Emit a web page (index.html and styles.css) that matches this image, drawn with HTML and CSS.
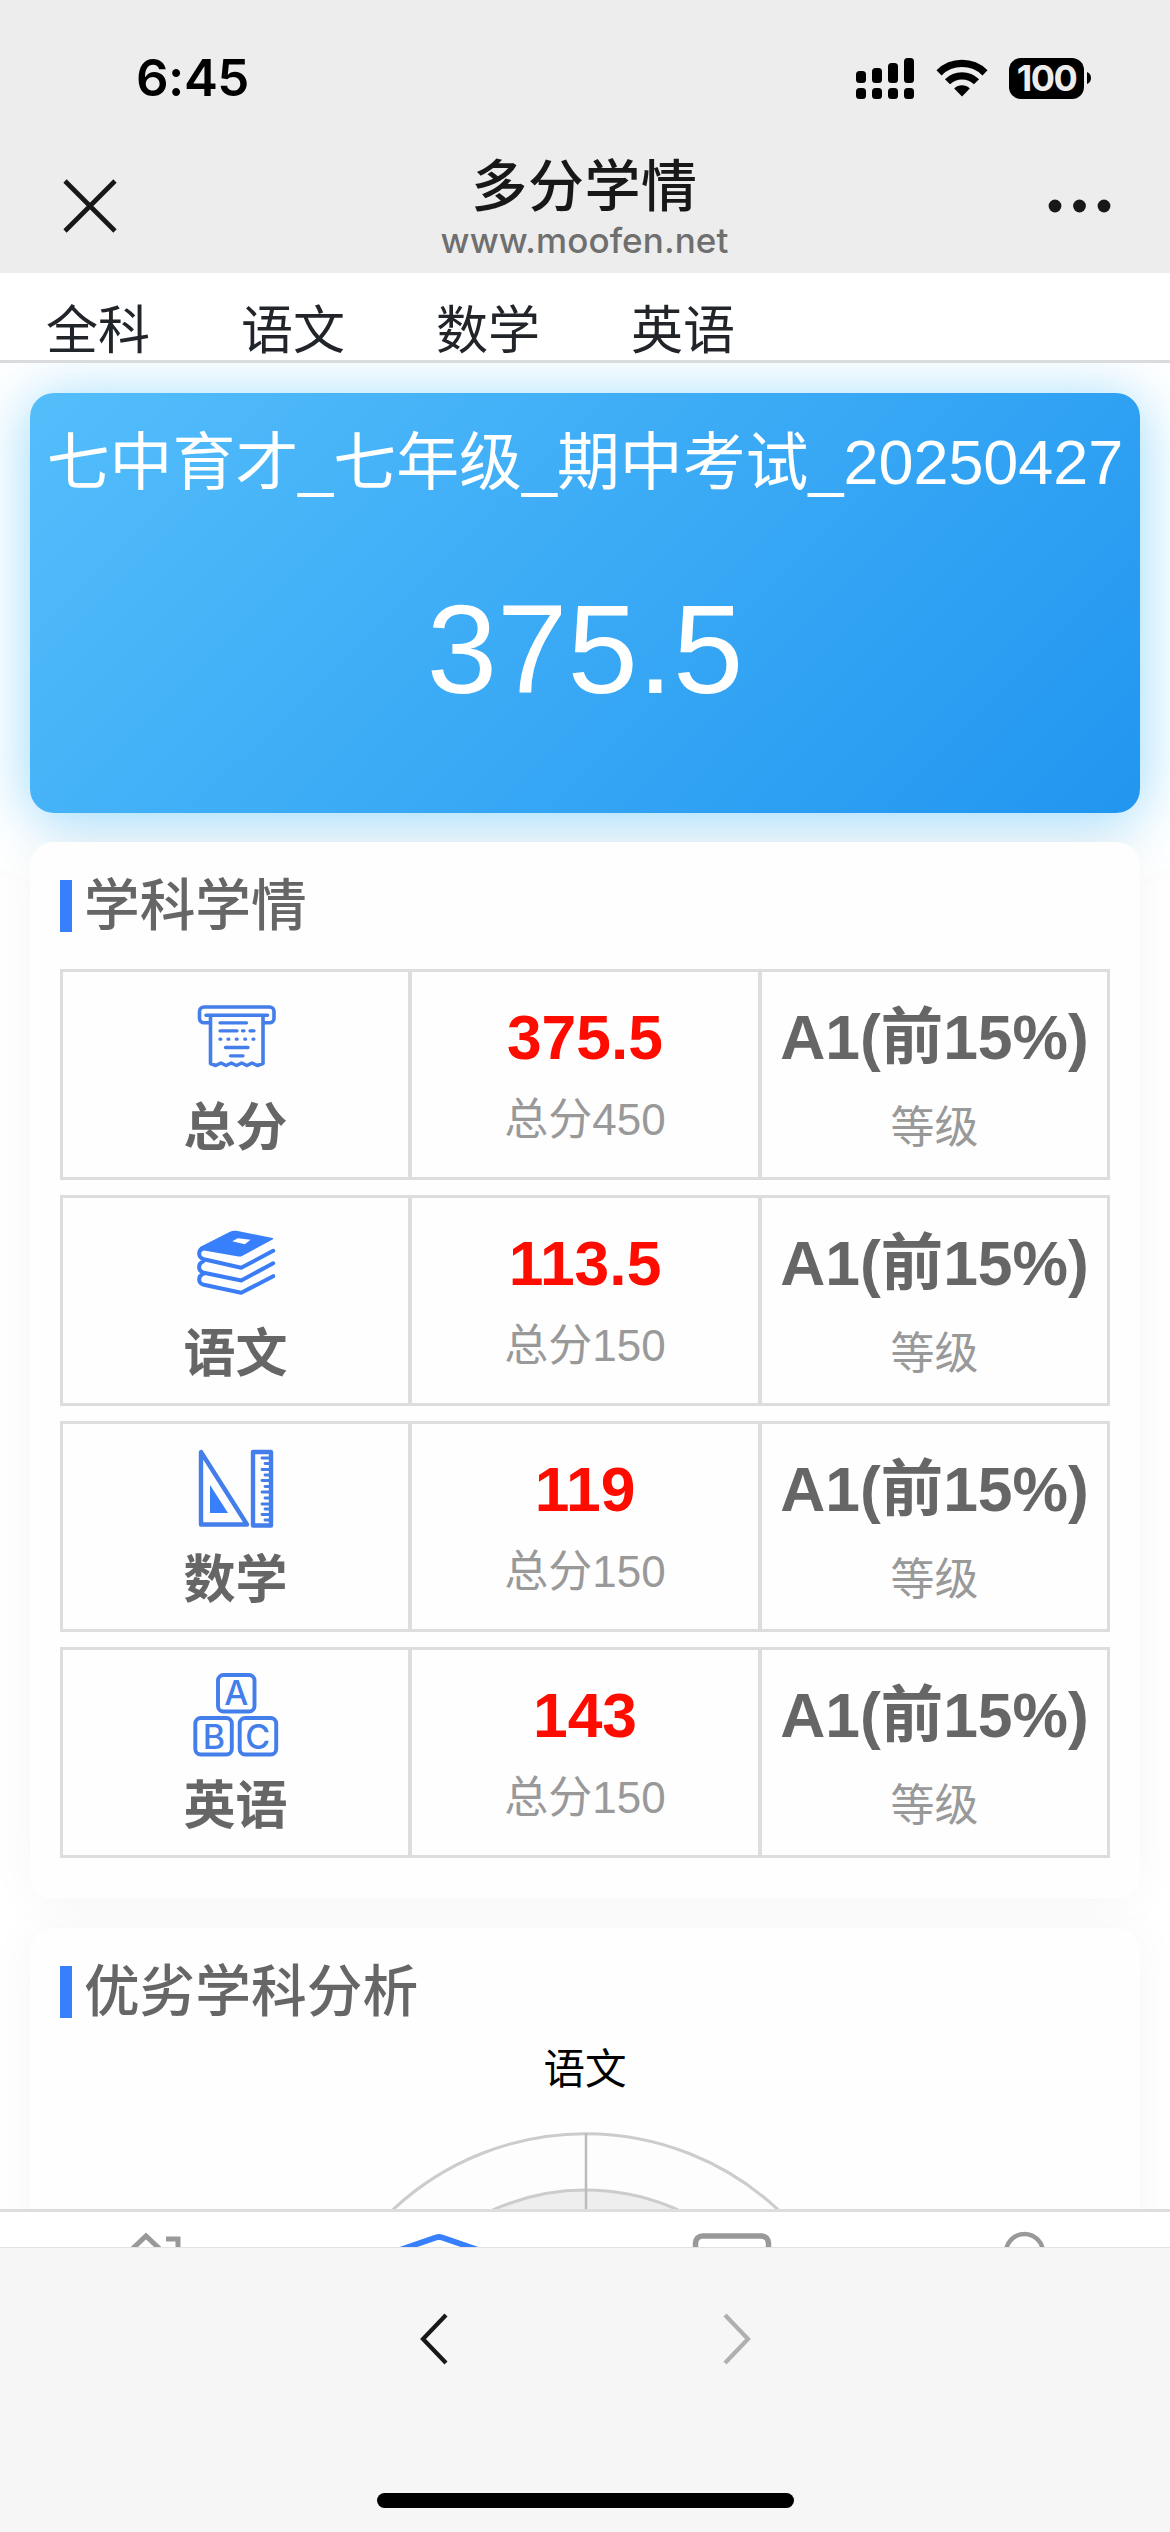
FILE: index.html
```html
<!DOCTYPE html>
<html lang="zh-CN">
<head>
<meta charset="utf-8">
<title>多分学情</title>
<link rel="stylesheet" href="styles.css">
</head>
<body>
<header class="header">
  <div class="status">
    <span class="clock">6:45</span>
    <div class="status-icons">
      <svg class="signal" width="58" height="41" viewBox="0 0 58 41"><g fill="#000"><rect x="0" y="13" width="10" height="12" rx="3.5"/><rect x="16" y="10" width="10" height="15" rx="3.5"/><rect x="32" y="5" width="10" height="20" rx="3.5"/><rect x="48" y="0" width="10" height="25" rx="3.5"/><rect x="0" y="30" width="10" height="11" rx="3.5"/><rect x="16" y="30" width="10" height="11" rx="3.5"/><rect x="32" y="30" width="10" height="11" rx="3.5"/><rect x="48" y="30" width="10" height="11" rx="3.5"/></g></svg>
      <svg class="wifi" width="52" height="38" viewBox="0 0 52 38"><g fill="none" stroke="#000" stroke-width="7.2"><path d="M3 13.8a33 33 0 0 1 46 0"/><path d="M11.5 22.8a20.5 20.5 0 0 1 29 0"/></g><path d="M26 37.5l-7.8-8a11 11 0 0 1 15.6 0z"/></svg>
      <div class="battery"><span class="level">100</span><svg width="4" height="12" viewBox="0 0 4 12"><path d="M0 0a6.5 6.5 0 0 1 0 12z"/></svg></div>
    </div>
  </div>
  <div class="titlebar">
    <svg width="54" height="54" viewBox="0 0 54 54"><path d="M2 2l50 50M52 2L2 52" stroke="#181818" stroke-width="4.6"/></svg>
    <div class="titles"><h1 class="title">多分学情</h1><p class="url">www.moofen.net</p></div>
    <svg width="64" height="14" viewBox="0 0 64 14"><g fill="#181818"><circle cx="7" cy="7" r="6.4"/><circle cx="31.5" cy="7" r="6.4"/><circle cx="56" cy="7" r="6.4"/></g></svg>
  </div>
</header>
<nav class="tabs"><span>全科</span><span>语文</span><span>数学</span><span>英语</span></nav>
<main class="content">
  <section class="exam"><h2 class="exam-name">七中育才_七年级_期中考试_20250427</h2><p class="exam-score">375.5</p></section>
  <section class="panel">
    <h3 class="heading"><span>学科学情</span></h3>
    <div class="rows">
      <div class="row">
        <div class="subject"><div class="icon"><svg width="80" height="64" viewBox="0 0 80 64" fill="none" stroke="#437eea" stroke-width="3.6" stroke-linecap="round" stroke-linejoin="round"><path d="M14 17.800H8a4.500 4.500 0 0 1-4.500-4.500V6.500A4.500 4.500 0 0 1 8 2h65.500A4.500 4.500 0 0 1 78 6.500v6.800a4.500 4.500 0 0 1-4.500 4.500h-6M10 10.200h61.500M14.500 11v47.500l5.200 2 5.200-2.500 5.200 2.500 5.200-2.500 5.200 2.500 5.200-2.500 5.200 2.500 5.200-2.500 5.200 2.500 5.700-2V11"/><path stroke-width="3.300" d="M24 17.800h26.500M24 25.800h17M46.500 25.800h1.500M54 25.800h4M24 34.200h.8M32 34.200h.8M40.300 34.200h.8M48.800 34.200h.8M57 34.200h.8M29.500 42.500h22.500M34.500 50.800h12.500"/></svg></div><b class="name">总分</b></div>
        <div class="score"><b>375.5</b><span>总分450</span></div>
        <div class="grade"><b>A1(前15%)</b><span>等级</span></div>
      </div>
      <div class="row">
        <div class="subject"><div class="icon"><svg width="80" height="66" viewBox="0 0 80 66"><path fill="#387ffb" fill-rule="evenodd" d="M4 17L33.500 2q3-1.600 7-1.200L76.500 8q1.500.6 0 1.500L46 26q-1.500.8-3.500.4L8 20.500 3 23zM36.200 11.200l12.600 3 5.700-4.400-12.700-1.600z"/><path fill="none" stroke="#3b7df4" stroke-width="4" stroke-linecap="round" stroke-linejoin="round" d="M7 18c-5 2-5.500 9.500.8 11.200l37.400 8.600 32-17M7 31.500c-5 2-5.500 9.500.8 11.200l37.400 7.800 32-17.200M7 44c-5 2-5.500 9 .8 10.800l37.400 8 32-16.600"/></svg></div><b class="name">语文</b></div>
        <div class="score"><b>113.5</b><span>总分150</span></div>
        <div class="grade"><b>A1(前15%)</b><span>等级</span></div>
      </div>
      <div class="row">
        <div class="subject"><div class="icon"><svg width="76" height="80" viewBox="0 0 76 80"><path fill="none" stroke="#437eea" stroke-width="4.400" stroke-linejoin="round" d="M3 3v72.500h46zM55 3h18v73.500H55z"/><path fill="#387ffb" d="M12 36v28h18z"/><path stroke="#437eea" stroke-width="2.800" stroke-linecap="round" d="M64 9h8M67 14.500h5M64 20.500h8M67 26h5M64 31.500h8M67 37.500h5M64 43h8M67 49h5M64 55h8M67 60h5M64 65.500h8M67 71h5"/></svg></div><b class="name">数学</b></div>
        <div class="score"><b>119</b><span>总分150</span></div>
        <div class="grade"><b>A1(前15%)</b><span>等级</span></div>
      </div>
      <div class="row">
        <div class="subject"><div class="icon"><svg width="86" height="84" viewBox="0 0 86 84" fill="none" stroke="#437eea" stroke-width="3.900"><rect x="25" y="2" width="36.500" height="36.500" rx="5.500"/><rect x="2.300" y="45" width="36.500" height="36.500" rx="5.500"/><rect x="46.700" y="45" width="36.500" height="36.500" rx="5.500"/><text class="block" x="43.200" y="32">A</text><text class="block" x="21" y="75.500">B</text><text class="block" x="64.800" y="75.500">C</text></svg></div><b class="name">英语</b></div>
        <div class="score"><b>143</b><span>总分150</span></div>
        <div class="grade"><b>A1(前15%)</b><span>等级</span></div>
      </div>
    </div>
  </section>
  <section class="panel analysis">
    <h3 class="heading"><span>优劣学科分析</span></h3>
    <p class="axis">语文</p>
    <svg class="radar" width="1050" height="80" viewBox="0 0 1050 80"><circle cx="525.500" cy="285.700" r="282" fill="#fdfdfd" stroke="#ccc" stroke-width="3"/><circle cx="525.500" cy="285.700" r="225.600" fill="#eee" stroke="#ccc" stroke-width="3"/><path d="M526 3v80" stroke="#bbb" stroke-width="2.500"/></svg>
  </section>
</main>
<nav class="tabbar">
  <svg viewBox="0 0 292 35"><path d="M128 41l18-17 18 17M166 27h12v14" fill="none" stroke="#999" stroke-width="5"/></svg>
  <svg viewBox="0 0 292 35"><path d="M98 41l45-15.500q3-1 6 0l45 15.500" fill="none" stroke="#387ffb" stroke-width="5.800"/></svg>
  <svg viewBox="0 0 292 35"><rect x="110.500" y="24" width="73" height="50" rx="7" fill="none" stroke="#999" stroke-width="5.500"/></svg>
  <svg viewBox="0 0 292 35"><circle cx="146.500" cy="40.500" r="18.500" fill="none" stroke="#999" stroke-width="4.500"/></svg>
</nav>
<footer class="toolbar">
  <div class="history">
    <svg width="30" height="52" viewBox="0 0 30 52"><path d="M27 2L4 26l23 24" fill="none" stroke="#181818" stroke-width="4.200"/></svg>
    <svg width="30" height="52" viewBox="0 0 30 52"><path d="M3 2l23 24L3 50" fill="none" stroke="#b0b0b0" stroke-width="4.200"/></svg>
  </div>
  <div class="home-indicator"></div>
</footer>
</body>
</html>
```
FILE: styles.css
```css
* { box-sizing: border-box; margin: 0; padding: 0; }
body {
  width: 1170px; height: 2532px; overflow: hidden;
  display: flex; flex-direction: column; background: #fff;
  font-family: "Liberation Sans", "Noto Sans CJK SC", sans-serif;
}
svg { display: block; flex: none; }
b, h1, h2, h3 { font-weight: 500; }
.header { height: 273px; flex: none; background: #ededed; }
.status { height: 156px; display: flex; justify-content: space-between; align-items: center; padding: 0 79px 0 136px; }
.clock { font: 600 51px/60px Inter, sans-serif; letter-spacing: -0.5px; }
.status-icons { display: flex; align-items: center; }
.wifi { margin: 0 21px 0 22px; }
.battery { display: flex; align-items: center; gap: 3px; }
.level {
  width: 75px; height: 41px; border-radius: 12px; background: #000; color: #ededed;
  font: 700 36px/41px Inter, sans-serif; letter-spacing: -1.5px; text-align: center;
}
.titlebar { height: 117px; display: flex; justify-content: space-between; padding: 0 58px 0 63px; }
.titlebar > svg:first-child { margin-top: 23px; }
.titlebar > svg:last-child { margin-top: 43px; }
.titles { text-align: center; padding-left: 4px; margin-top: -5px; }
.title { font: 500 56px/62px "Noto Sans CJK SC", sans-serif; letter-spacing: 0.6px; color: #181818; }
.url { font: 450 35px/48px Inter, sans-serif; letter-spacing: 0.1px; color: #6f6f6f; padding-top: 3px; }
.tabs {
  height: 90px; flex: none; display: flex; gap: 91px; padding: 16px 0 0 46px;
  border-bottom: 3px solid #dadbdd; color: #212529;
  font: 400 52px/75px "Noto Sans CJK SC", sans-serif;
}
.content { height: 1846px; flex: none; overflow: hidden; padding: 30px 30px 0; display: flex; flex-direction: column; gap: 29px; }
.exam {
  height: 420px; flex: none; border-radius: 24px; text-align: center; color: #fff;
  background: linear-gradient(135deg, #54befb, #2196f0);
  box-shadow: 0 6px 60px rgba(79, 190, 250, .6);
}
.exam-name { font-size: 62.9px; line-height: 138px; font-weight: 400; white-space: nowrap; }
.exam-score { font-size: 126.5px; line-height: 140px; padding-top: 48px; }
.panel { flex: none; height: 1057px; border-radius: 24px; background: #fefefe; padding: 30px 30px 0; box-shadow: 0 0 50px rgba(0, 0, 0, .045); }
.analysis { height: 600px; }
.heading { display: flex; align-items: center; gap: 12px; height: 67px; font: 500 55.7px/67px "Noto Sans CJK SC", sans-serif; color: #666; }
.heading::before { content: ""; width: 12px; height: 52px; background: #387ffb; }
.heading span { margin-top: -10px; }
.rows { display: flex; flex-direction: column; gap: 15px; padding-top: 30px; }
.row { height: 211px; display: grid; grid-template-columns: 345px 350px 349px; border: 3px solid #ddd; text-align: center; color: #666; }
.row > div { display: flex; flex-direction: column; align-items: center; white-space: nowrap; }
.row > div + div { border-left: 4px solid #ddd; }
.icon { height: 122px; padding-top: 7px; display: flex; align-items: center; justify-content: center; }
.name { font: 700 52px/60px "Noto Sans CJK SC", sans-serif; }
.score b, .grade b { font-size: 62.4px; line-height: 70px; font-weight: 700; padding-top: 31px; }
.score b { color: #ff0c00; }
.score span, .grade span { font-size: 44px; line-height: 60px; color: #999; padding-top: 17px; }
.grade span { padding-top: 25px; }
.block { font: 500 34px Inter, sans-serif; fill: #437eea; stroke: none; text-anchor: middle; }
.axis { text-align: center; font: 400 41.5px/60px "Noto Sans CJK SC", sans-serif; color: #000; padding-top: 11px; }
.radar { margin-top: 34px; }
.tabbar { height: 38px; flex: none; border-top: 3px solid #ddd; background: #fff; display: grid; grid-template-columns: repeat(4, 1fr); overflow: hidden; }
.tabbar svg { width: 292px; height: 35px; }
.toolbar { height: 285px; background: #f6f6f6; border-top: 1px solid #e3e3e3; display: flex; flex-direction: column; align-items: center; justify-content: space-between; padding: 65px 0 24px; }
.history { display: flex; gap: 273px; }
.home-indicator { width: 417px; height: 15px; border-radius: 8px; background: #000; }
```
